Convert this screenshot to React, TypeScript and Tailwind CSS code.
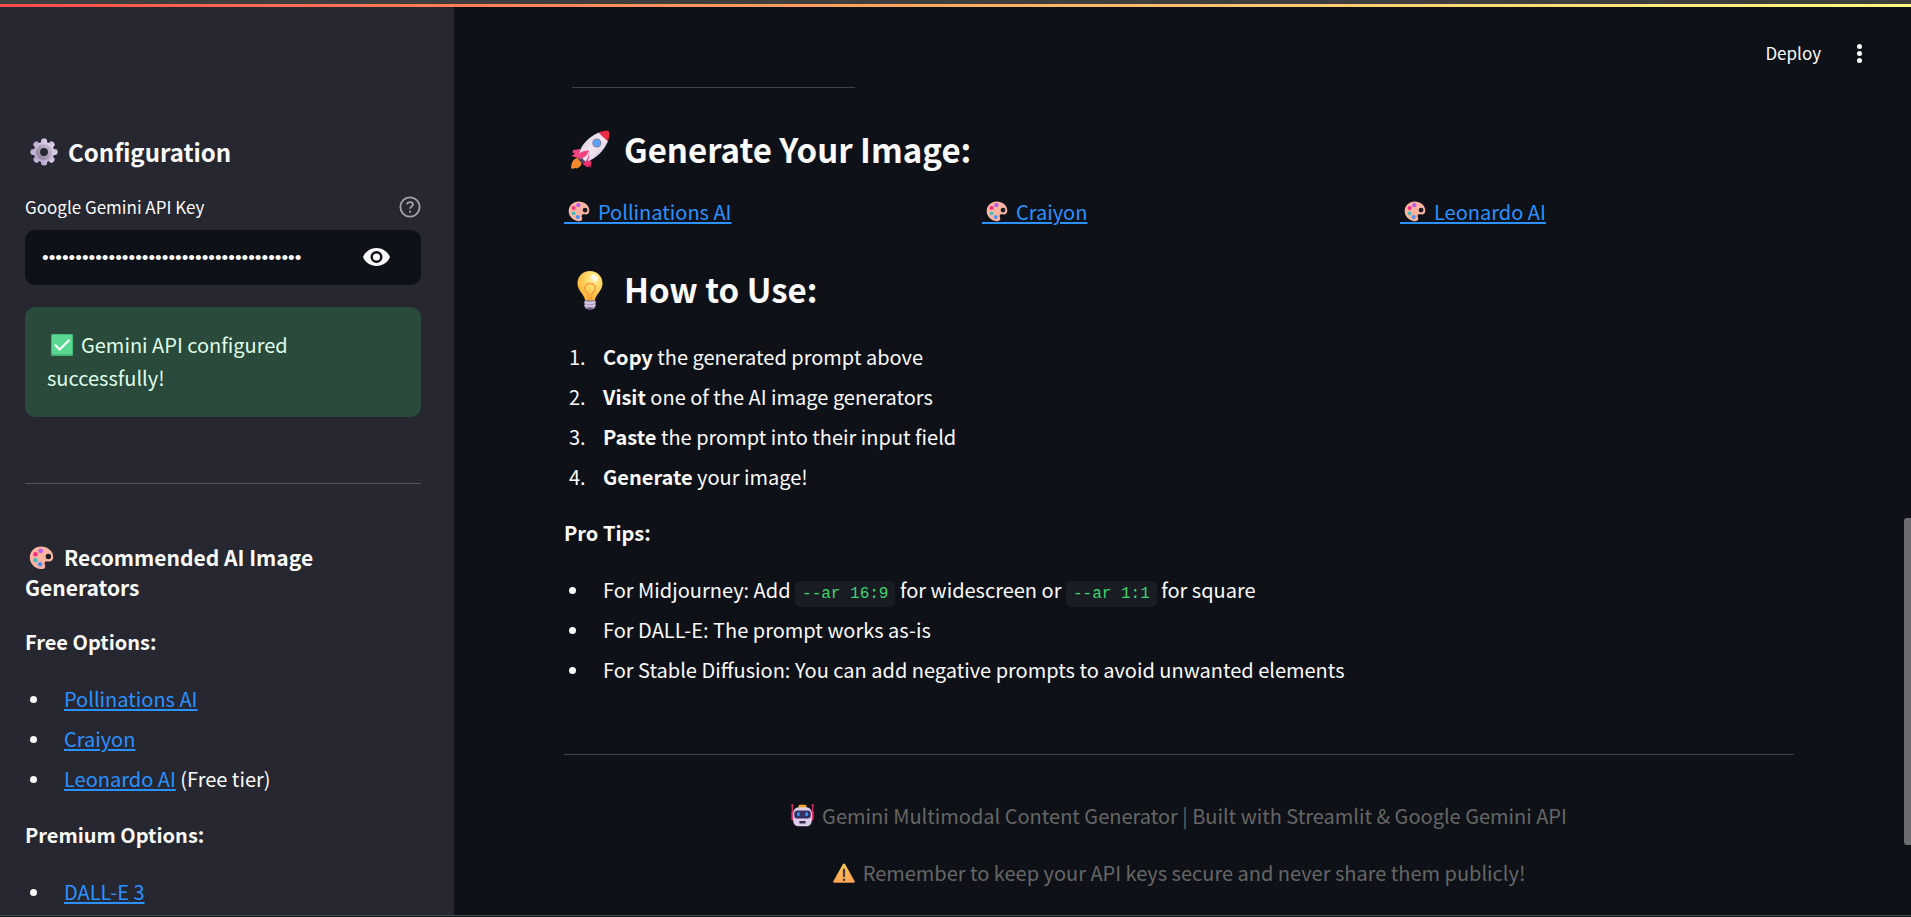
import React, { ReactNode } from "react";

type IconProps = { className?: string };

function Gear({ className }: IconProps) {
  return (
    <svg aria-hidden="true" viewBox="0 0 32 32" className={className}>
      <defs>
        <linearGradient id="gearOuter" x1="1" y1="0" x2="0" y2="1">
          <stop offset="0" stopColor="#e2daea" />
          <stop offset="1" stopColor="#b29ccb" />
        </linearGradient>
        <linearGradient id="gearInner" x1="1" y1="0" x2="0" y2="1">
          <stop offset="0" stopColor="#d3c6dd" />
          <stop offset="1" stopColor="#85788f" />
        </linearGradient>
      </defs>
      <g fill="url(#gearOuter)">
        {[0, 45, 90, 135].map((a) => (
          <rect key={a} x="12.8" y="1.500" width="6.4" height="29" rx="2.6" transform={`rotate(${a} 16 16)`} />
        ))}
        <circle cx="16" cy="16" r="11" />
      </g>
      <circle cx="16" cy="16" r="8.6" fill="url(#gearInner)" />
      <circle cx="16" cy="16" r="4.2" fill="#262730" />
    </svg>
  );
}

function Palette({ className }: IconProps) {
  return (
    <svg aria-hidden="true" viewBox="0 0 32 32" className={className}>
      <path
        d="M15.500 2C7.500 2 1 8.200 1 16c0 7.600 6 14 14 14.800 3.600.3 5.800-1.200 5.800-3.400 0-1.500-1-2.400-1-4 0-1.700 1.300-2.600 3.200-2.600 1.700 0 2.800.6 4.300.2C29.800 20.300 31 18 31 15 30.600 7.500 23.800 2 15.500 2Z"
        fill="#ffb4a2"
      />
      <circle cx="24.800" cy="14.600" r="3.500" fill="#1b1d25" />
      <circle cx="15" cy="7.500" r="3" fill="#b95df0" />
      <circle cx="8.200" cy="11.800" r="2.900" fill="#f72f80" />
      <circle cx="8.200" cy="19.400" r="2.800" fill="#3fbfc0" />
      <circle cx="14.200" cy="24.600" r="2.900" fill="#4a90f5" />
    </svg>
  );
}

function CheckBadge({ className }: IconProps) {
  return (
    <svg aria-hidden="true" viewBox="0 0 32 32" className={className}>
      <rect width="32" height="32" rx="2" fill="#43b277" />
      <rect x="1.500" y="1" width="29.500" height="28.500" rx="1.500" fill="#5ad891" />
      <path d="M6.500 16.500 12.500 22.500 26 9.500" fill="none" stroke="#fff" strokeWidth="3.200" strokeLinecap="round" strokeLinejoin="round" />
    </svg>
  );
}

function Rocket({ className }: IconProps) {
  return (
    <svg aria-hidden="true" viewBox="0 0 40 40" className={className}>
      <defs>
        <linearGradient id="hull" x1="0" y1="0" x2="1" y2="1">
          <stop offset="0" stopColor="#cfc3d6" />
          <stop offset=".5" stopColor="#f2e9f4" />
          <stop offset="1" stopColor="#cdb7d6" />
        </linearGradient>
      </defs>
      <path d="M7.500 28C4 28.500 1 32 1.200 38.500c2 .3 3 .2 4-.8l1 .8c3-.5 5-2.500 5.500-5.500Z" fill="#f58a2c" />
      <path d="M6.500 27 13 33.500 17.500 31 9 22.500Z" fill="#54456a" />
      <path d="M29 2.500C20 6 11 14.500 8.500 24.500L16 32C27 28.500 34.500 19.500 38 11Z" fill="url(#hull)" />
      <path d="M29 2.500C32.500 1 36 .4 38.800 1.200 39.600 4 39.200 7.500 38 11 35.500 9.500 31 5 29 2.500Z" fill="#ef2c48" />
      <circle cx="26.800" cy="13" r="4.600" fill="#8085ad" />
      <circle cx="26.800" cy="13" r="3.300" fill="#58a4fb" />
      <path d="M10.500 19 3 20 2.500 22.500 5 23.500 1.500 26 11 29C15 27.500 18.500 24 19 20.500 16 20 12.500 21 9 23.500Z" fill="#f4447f" />
      <path d="M19 20.500C19.500 27 16.500 31.500 12.500 34L18 37.500 19 35.500 20.500 38 21.500 30.500C20 31 19 31 17.500 31.500 19 28.500 19.800 24 19 20.500Z" fill="#f62f75" />
    </svg>
  );
}

function Bulb({ className }: IconProps) {
  return (
    <svg aria-hidden="true" viewBox="0 0 40 40" className={className}>
      <defs>
        <radialGradient id="glass" cx=".65" cy=".28" r=".75">
          <stop offset="0" stopColor="#fff6c4" />
          <stop offset=".3" stopColor="#ffe070" />
          <stop offset="1" stopColor="#ffae33" />
        </radialGradient>
      </defs>
      <path d="M20 1C12.500 1 7.500 6.500 7.500 13.500c0 7.500 6.500 10 7.700 17h9.600c1.200-7 7.700-9.500 7.700-17C32.500 6.500 27.500 1 20 1Z" fill="url(#glass)" />
      <path d="M18.500 30V24C13 20.500 14 13.500 20 13.500s7 7 1.500 10.500V30" fill="none" stroke="#fa9e3c" strokeWidth="1.600" />
      <ellipse cx="24.500" cy="7.500" rx="4" ry="2.600" transform="rotate(35 24.500 7.500)" fill="#fffbe8" />
      <path d="M14.500 30.500h11v5.500c0 2-2 3.500-5.500 3.500s-5.500-1.500-5.500-3.500Z" fill="#b7a0c6" />
      <path d="M14.500 32.500c4 1.200 8 .8 11-.5M14.500 35.500c4 1.200 8 .8 11-.5" stroke="#e7dcee" strokeWidth="1.200" fill="none" />
      <path d="M17 37.500h6l-1 2h-4Z" fill="#6d5a80" />
    </svg>
  );
}

function Robot({ className }: IconProps) {
  return (
    <svg aria-hidden="true" viewBox="0 0 32 32" className={className}>
      <rect x="10.500" y="1" width="11" height="6" rx="2" fill="#f0a52b" />
      <path d="M1.800 2v12M30.200 2v12" stroke="#e8336f" strokeWidth="1.600" strokeLinecap="round" />
      <circle cx="1.800" cy="1.800" r="1.600" fill="#e8336f" />
      <circle cx="30.200" cy="1.800" r="1.600" fill="#e8336f" />
      <rect x=".5" y="10" width="5" height="13" rx="2.500" fill="#e8336f" />
      <rect x="26.500" y="10" width="5" height="13" rx="2.500" fill="#e8336f" />
      <path d="M11 4.500h10c5 0 8 4 8 9v9c0 5-3 8.500-8 8.500H11c-5 0-8-3.500-8-8.500v-9c0-5 3-9 8-9Z" fill="#dccbe9" />
      <rect x="4.500" y="9" width="23" height="11" rx="4.500" fill="#343060" />
      <rect x="8.500" y="11.500" width="3.600" height="5.500" rx="1.600" fill="#3d9bf3" />
      <rect x="19.900" y="11.500" width="3.600" height="5.500" rx="1.600" fill="#3d9bf3" />
      <rect x="11.500" y="23.500" width="9" height="3.600" rx="1.400" fill="#3a2d50" />
    </svg>
  );
}

function Warning({ className }: IconProps) {
  return (
    <svg aria-hidden="true" viewBox="0 0 32 32" className={className}>
      <defs>
        <linearGradient id="sign" x1="0" y1="0" x2="0" y2="1">
          <stop offset="0" stopColor="#fbc64f" />
          <stop offset="1" stopColor="#ffa556" />
        </linearGradient>
      </defs>
      <path d="M14.500 3c.8-1.300 2.200-1.300 3 0L31.500 28c.6 1.100 0 2-1.200 2H1.700C.5 30-.1 29.100.5 28Z" fill="url(#sign)" />
      <rect x="14.400" y="9.500" width="3.200" height="12.500" rx="1.600" fill="#443a48" />
      <circle cx="16" cy="25.800" r="1.800" fill="#443a48" />
    </svg>
  );
}

function Link({ children }: { children: ReactNode }) {
  return (
    <a href="#" className="text-[#2b91ff] underline decoration-2 underline-offset-2">
      {children}
    </a>
  );
}

function Bullets({ children }: { children: ReactNode }) {
  return <ul className="flex flex-col gap-2">{children}</ul>;
}

function Bullet({ children }: { children: ReactNode }) {
  return (
    <li className="flex items-center">
      <span className="ml-[5px] mr-[27px] size-[7px] shrink-0 rounded-full bg-[#fafafa]" />
      <span>{children}</span>
    </li>
  );
}

function Code({ children }: { children: ReactNode }) {
  return (
    <code className="rounded-[5px] bg-[#1a1c24] px-[7px] py-1 font-['Liberation_Mono',monospace] text-base leading-none text-[#3dd56d]">
      {children}
    </code>
  );
}

function SectionTitle({ icon, children }: { icon: ReactNode; children: ReactNode }) {
  return (
    <h2 className="flex h-12 items-center gap-[14px] pl-[6px] text-[33px] font-semibold">
      {icon}
      <span className="pb-[2px]">{children}</span>
    </h2>
  );
}

const steps = [
  ["Copy", " the generated prompt above"],
  ["Visit", " one of the AI image generators"],
  ["Paste", " the prompt into their input field"],
  ["Generate", " your image!"],
];

function Sidebar() {
  return (
    <aside className="w-[454px] shrink-0 overflow-hidden bg-[#262730] pl-[25px] pr-[33px] pt-[125px]">
      <h2 className="flex h-10 items-center gap-[9px] pl-1 text-2xl font-semibold leading-10">
        <Gear className="size-[30px]" />
        Configuration
      </h2>
      <div className="mt-[19px] flex h-8 items-center justify-between">
        <label htmlFor="api-key" className="text-[17px]">
          Google Gemini API Key
        </label>
        <button aria-label="Help" className="text-[#a3a4a9]">
          <svg viewBox="0 0 24 24" className="size-[22px]" fill="none" stroke="currentColor" strokeWidth="2">
            <circle cx="12" cy="12" r="10.500" />
            <path d="M8.800 9.200C9 7.500 10.300 6.600 12 6.600s3.200 1 3.200 2.700c0 2.200-3.200 2.400-3.200 4.700M12 16.200v2.200" />
          </svg>
        </button>
      </div>
      <div className="mt-[7px] flex h-[55px] items-center rounded-[10px] bg-[#0e1117] pl-[17px] pr-[31px]">
        <input
          id="api-key"
          type="password"
          defaultValue="000000000000000000000000000000000000000"
          className="min-w-0 flex-1 bg-transparent font-['Liberation_Sans',sans-serif] text-[19px] outline-none"
        />
        <button aria-label="Show password" className="pb-[2px]">
          <svg viewBox="0 0 27 18" className="h-[18px] w-[27px]">
            <path fillRule="evenodd" fill="#fafafa" d="M13.500 0C7.400 0 2.200 3.700 0 9c2.200 5.300 7.400 9 13.500 9S24.800 14.300 27 9C24.800 3.700 19.600 0 13.500 0Zm0 15a6 6 0 1 1 0-12 6 6 0 0 1 0 12Zm0-2.400a3.600 3.600 0 1 0 0-7.200 3.600 3.600 0 0 0 0 7.200Z" />
          </svg>
        </button>
      </div>
      <div role="status" className="mt-[22px] rounded-[10px] bg-[#2a4a3b] px-[22px] pb-[23px] pt-[21px] leading-[33px] text-[#dffde9]">
        <CheckBadge className="ml-1 mr-2 inline-block size-[22px] align-[-3px]" />
        Gemini API configured successfully!
      </div>
      <hr className="mt-[66px] border-[#53545c]" />
      <h3 className="mt-[58px] text-[21px] font-semibold leading-[30px]">
        <Palette className="ml-1 mr-[10px] inline-block size-[25px] align-[-4px]" />
        Recommended AI Image Generators
      </h3>
      <p className="mt-6 font-semibold">Free Options:</p>
      <div className="mt-[25px]">
        <Bullets>
          <Bullet><Link>Pollinations AI</Link></Bullet>
          <Bullet><Link>Craiyon</Link></Bullet>
          <Bullet><Link>Leonardo AI</Link> (Free tier)</Bullet>
        </Bullets>
      </div>
      <p className="mt-6 font-semibold">Premium Options:</p>
      <div className="mt-[25px]">
        <Bullets>
          <Bullet><Link>DALL-E 3</Link></Bullet>
        </Bullets>
      </div>
    </aside>
  );
}

export default function App() {
  return (
    <div className="flex h-screen flex-col overflow-hidden bg-[#0e1117] font-['Noto_Sans_CJK_SC',sans-serif] text-[20px] leading-8 text-[#fafafa]">
      <div className="h-1 shrink-0 bg-[#3d3d3d]" />
      <div className="h-[3px] shrink-0 bg-linear-to-r from-[#ff4b4b] to-[#fffd80]" />
      <div className="flex min-h-0 flex-1">
        <Sidebar />
        <div className="relative min-w-0 flex-1 overflow-hidden">
          <header className="absolute right-[42px] top-[30px] flex items-center gap-7">
            <button className="text-[17px] leading-8">Deploy</button>
            <button aria-label="Menu" className="flex w-[20px] flex-col items-center gap-[2px]">
              <span className="size-[5px] rounded-full bg-[#fafafa]" />
              <span className="size-[5px] rounded-full bg-[#fafafa]" />
              <span className="size-[5px] rounded-full bg-[#fafafa]" />
            </button>
          </header>
          <div className="absolute right-0 top-[511px] h-[327px] w-[7px] rounded-l-[3px] bg-[#6c6d71]" />
          <main className="pl-[110px] pr-[117px] pt-20">
            <hr className="mb-[38px] ml-2 w-[283px] border-[#41434a]" />
            <SectionTitle icon={<Rocket className="size-10" />}>Generate Your Image:</SectionTitle>
            <div className="mb-[38px] mt-[22px] grid grid-cols-3 gap-6">
              {["Pollinations AI", "Craiyon", "Leonardo AI"].map((name) => (
                <div key={name}>
                  <Link>
                    <span className="inline-block border-b-2 border-[#2b91ff] pl-1 pr-2 align-[-4px]">
                      <Palette className="block size-[22px]" />
                    </span>
                    {name}
                  </Link>
                </div>
              ))}
            </div>
            <SectionTitle icon={<Bulb className="size-10" />}>How to Use:</SectionTitle>
            <ol className="mt-[27px] flex flex-col gap-2">
              {steps.map(([verb, rest], i) => (
                <li key={verb} className="flex">
                  <span className="w-[39px] pl-[5px]">{i + 1}.</span>
                  <span><strong className="font-semibold">{verb}</strong>{rest}</span>
                </li>
              ))}
            </ol>
            <p className="mt-6 font-semibold">Pro Tips:</p>
            <div className="mt-[25px]">
              <Bullets>
                <Bullet>For Midjourney: Add <Code>--ar 16:9</Code> for widescreen or <Code>--ar 1:1</Code> for square</Bullet>
                <Bullet>For DALL-E: The prompt works as-is</Bullet>
                <Bullet>For Stable Diffusion: You can add negative prompts to avoid unwanted elements</Bullet>
              </Bullets>
            </div>
            <hr className="mt-[68px] border-[#41434a]" />
            <footer className="mt-[45px] flex flex-col items-center gap-[25px] text-[#666666]">
              <p><Robot className="mr-2 inline-block size-[23px] align-[-3px]" />Gemini Multimodal Content Generator | Built with Streamlit &amp; Google Gemini API</p>
              <p><Warning className="mr-2 inline-block size-[22px] align-[-3px]" />Remember to keep your API keys secure and never share them publicly!</p>
            </footer>
          </main>
        </div>
      </div>
      <div className="h-[2px] shrink-0 border-t border-[#3d4747] bg-[#15211f]" />
    </div>
  );
}
